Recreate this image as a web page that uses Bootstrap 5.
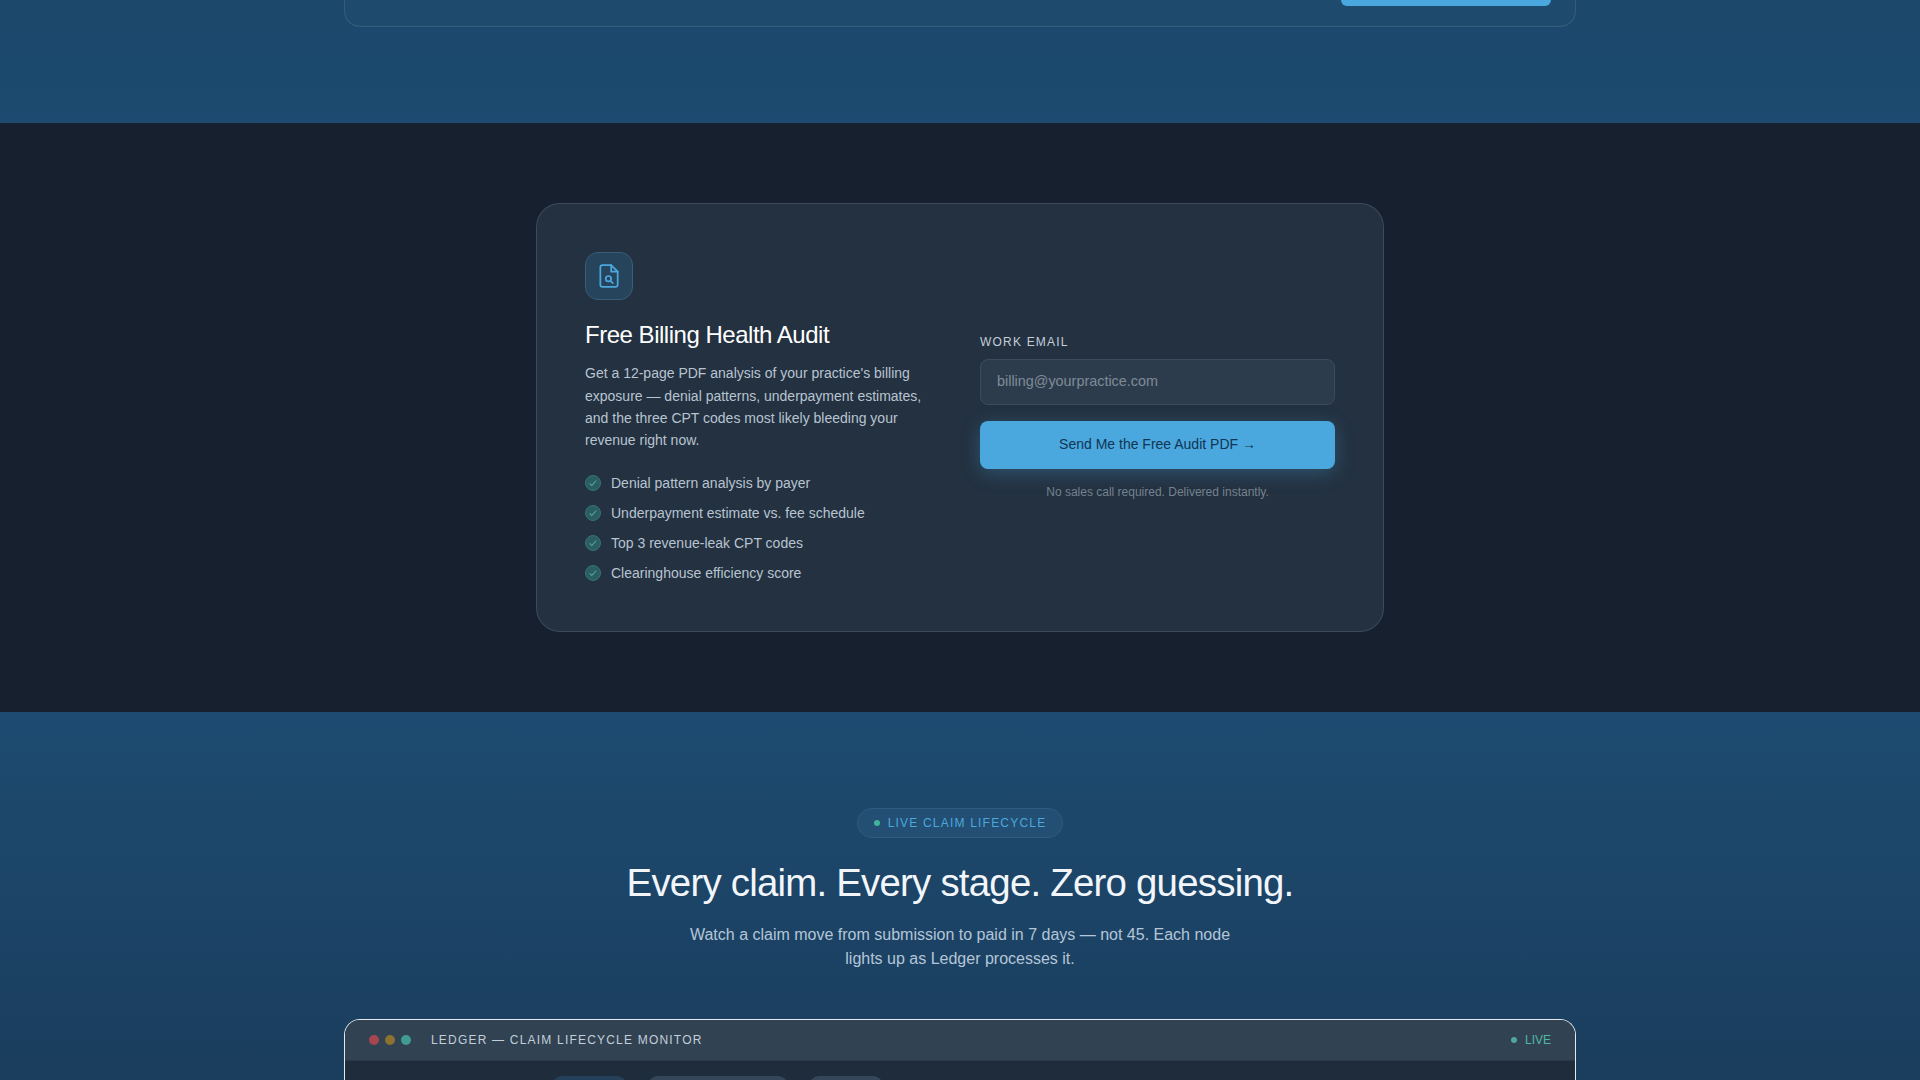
<!DOCTYPE html>
<html lang="en">
<head>
<meta charset="utf-8">
<title>Ledger</title>
<meta name="viewport" content="width=device-width, initial-scale=1">
<link href="https://cdn.jsdelivr.net/npm/bootstrap@5.3.3/dist/css/bootstrap.min.css" rel="stylesheet">
<style>
    html, body { height: 1080px; overflow: hidden; }
    body { font-family: "Liberation Sans", Arial, sans-serif; background: #16202f; color: #fff; }
    .band-top { height: 123px; background: linear-gradient(180deg, #1b486b, #1c4a70); }
    .shell { width: 1232px; margin: 0 auto; }
    .stub-card { height: 27px; border: 1px solid rgba(255,255,255,.1); border-top: 0; border-radius: 0 0 16px 16px; background: rgba(255,255,255,.015); padding-right: 24px; }
    .stub-btn { width: 210px; height: 6px; background: #4aa8de; border-radius: 0 0 8px 8px; }
    .band-dark { background: #16202f; padding: 80px 0; }
    .audit-card { width: 848px; height: 429px; margin: 0 auto; padding: 48px; background: #233140; border: 1px solid rgba(255,255,255,.12); border-radius: 24px; gap: 48px; }
    .audit-left { width: 347px; flex: none; }
    .audit-right { flex: 1; padding-bottom: 2px; }
    .doc-tile { width: 48px; height: 48px; border-radius: 13px; background: #26445c; border: 1px solid #375e7b; color: #4aa8de; margin-bottom: 19px; }
    .audit-title { font-size: 24px; font-weight: 400; letter-spacing: -.48px; line-height: 1.3; margin-bottom: 12px; color: #fff; }
    .audit-copy { font-size: 14px; line-height: 1.6; color: #b8c4d1; margin-bottom: 21px; }
    .perk-list { list-style: none; margin: 0; padding: 0; gap: 10px; }
    .perk-list li { font-size: 14px; line-height: 20px; color: #b8c4d1; gap: 10px; }
    .tick { width: 16px; height: 16px; border-radius: 50%; flex: none; background: #2b5e63; border: 1px solid #397470; color: #5aa89a; }
    .field-label { font-size: 12px; letter-spacing: 1.2px; color: #c3cedb; margin-bottom: 10px; line-height: 14px; display: block; }
    .email-field.form-control { height: 46px; background: #2d3c4c; border: 1px solid #3d4c5c; border-radius: 8px; padding: 0 16px 2px; font-size: 14.4px; color: #fff; box-shadow: none; }
    .email-field.form-control::placeholder { color: #7f8b98; opacity: 1; }
    .send-btn.btn { width: 100%; height: 48px; margin-top: 16px; background: #4aa8de; border: 0; border-radius: 8px; color: #113553; font-size: 14px; box-shadow: 0 4px 20px rgba(74,168,222,.3); }
    .fine-print { font-size: 12px; color: #76828f; text-align: center; margin: 16px 0 0; line-height: 14px; }
    .band-blue { background: linear-gradient(180deg, #1d4b71, #1a3a58 460px); height: 368px; padding-top: 96px; }
    .live-pill { height: 30px; padding: 0 16px; border-radius: 15px; background: #234f74; border: 1px solid #2e5b80; color: #4aa8de; font-size: 12px; letter-spacing: 1.2px; gap: 8px; }
    .pulse { width: 6px; height: 6px; border-radius: 50%; background: #3fb39c; flex: none; }
    .main-head { font-size: 38.4px; font-weight: 400; letter-spacing: -.77px; line-height: 1.2; margin: 22px 0 17px; color: #f2f6fa; }
    .main-sub { font-size: 16px; line-height: 1.5; color: #b4c6d8; margin: 0 0 48px; }
    .monitor { border: 1px solid #e3e9ef; border-bottom: 0; border-radius: 16px 16px 0 0; background: #1e2c3b; overflow: hidden; }
    .monitor-bar { height: 41px; background: #314252; border-bottom: 1px solid #2a3847; padding: 0 24px; }
    .lamp { width: 10px; height: 10px; border-radius: 50%; margin-right: 6px; }
    .lamp-r { background: #a84650; } .lamp-y { background: #8c722f; } .lamp-g { background: #3f9c8f; }
    .monitor-name { font-size: 12px; letter-spacing: 1.2px; color: #c3ced9; margin-left: 14px; }
    .live-tag { font-size: 12px; color: #4fb8a4; gap: 8px; }
    .live-tag .pulse { background: #4fa79a; }
    .tab-row { padding-left: 207px; padding-top: 15px; height: 40px; gap: 21px; }
    .tab-chip { height: 24px; border-radius: 10px; background: #33465a; }
    .tab-chip-on { width: 75px; background: #24405a; }
    .tab-chip-wide { width: 140px; }
    .tab-chip-small { width: 74px; }
</style>
</head>
<body>
    <section class="band-top">
        <div class="shell stub-card d-flex justify-content-end align-items-start">
            <div class="stub-btn"></div>
        </div>
    </section>

    <section class="band-dark">
        <div class="audit-card d-flex">
            <div class="audit-left">
                <div class="doc-tile d-flex align-items-center justify-content-center">
                    <svg width="26" height="26" viewBox="0 0 24 24" fill="none" stroke="currentColor" stroke-width="1.6" stroke-linecap="round" stroke-linejoin="round"><path d="M14 2H6a2 2 0 0 0-2 2v16a2 2 0 0 0 2 2h12a2 2 0 0 0 2-2V8z"/><path d="M14 2v6h6"/><circle cx="11.5" cy="14.5" r="2.5"/><path d="M13.5 16.5 15.5 18.5"/></svg>
                </div>
                <h3 class="audit-title">Free Billing Health Audit</h3>
                <p class="audit-copy">Get a 12-page PDF analysis of your practice's billing exposure — denial patterns, underpayment estimates, and the three CPT codes most likely bleeding your revenue right now.</p>
                <ul class="perk-list d-flex flex-column">
                    <li class="d-flex align-items-center"><span class="tick d-flex align-items-center justify-content-center"><svg width="10" height="10" viewBox="0 0 24 24" fill="none" stroke="currentColor" stroke-width="2.5"><path d="M4 13l5 5L20 6"/></svg></span>Denial pattern analysis by payer</li>
                    <li class="d-flex align-items-center"><span class="tick d-flex align-items-center justify-content-center"><svg width="10" height="10" viewBox="0 0 24 24" fill="none" stroke="currentColor" stroke-width="2.5"><path d="M4 13l5 5L20 6"/></svg></span>Underpayment estimate vs. fee schedule</li>
                    <li class="d-flex align-items-center"><span class="tick d-flex align-items-center justify-content-center"><svg width="10" height="10" viewBox="0 0 24 24" fill="none" stroke="currentColor" stroke-width="2.5"><path d="M4 13l5 5L20 6"/></svg></span>Top 3 revenue-leak CPT codes</li>
                    <li class="d-flex align-items-center"><span class="tick d-flex align-items-center justify-content-center"><svg width="10" height="10" viewBox="0 0 24 24" fill="none" stroke="currentColor" stroke-width="2.5"><path d="M4 13l5 5L20 6"/></svg></span>Clearinghouse efficiency score</li>
                </ul>
            </div>
            <div class="audit-right d-flex flex-column justify-content-center">
                <label class="field-label" for="workEmail">WORK EMAIL</label>
                <input class="form-control email-field" id="workEmail" type="email" placeholder="billing@yourpractice.com">
                <button class="btn send-btn" type="button">Send Me the Free Audit PDF →</button>
                <p class="fine-print">No sales call required. Delivered instantly.</p>
            </div>
        </div>
    </section>

    <section class="band-blue text-center">
        <div class="live-pill d-inline-flex align-items-center"><span class="pulse"></span>LIVE CLAIM LIFECYCLE</div>
        <h2 class="main-head">Every claim. Every stage. Zero guessing.</h2>
        <p class="main-sub">Watch a claim move from submission to paid in 7 days — not 45. Each node<br>lights up as Ledger processes it.</p>
        <div class="shell monitor text-start">
            <div class="monitor-bar d-flex align-items-center">
                <span class="lamp lamp-r"></span><span class="lamp lamp-y"></span><span class="lamp lamp-g"></span>
                <span class="monitor-name">LEDGER — CLAIM LIFECYCLE MONITOR</span>
                <span class="live-tag d-flex align-items-center ms-auto"><span class="pulse"></span>LIVE</span>
            </div>
            <div class="tab-row d-flex">
                <span class="tab-chip tab-chip-on"></span>
                <span class="tab-chip tab-chip-wide"></span>
                <span class="tab-chip tab-chip-small"></span>
            </div>
        </div>
    </section>
    <script src="https://cdn.jsdelivr.net/npm/bootstrap@5.3.3/dist/js/bootstrap.bundle.min.js"></script>
</body>
</html>
